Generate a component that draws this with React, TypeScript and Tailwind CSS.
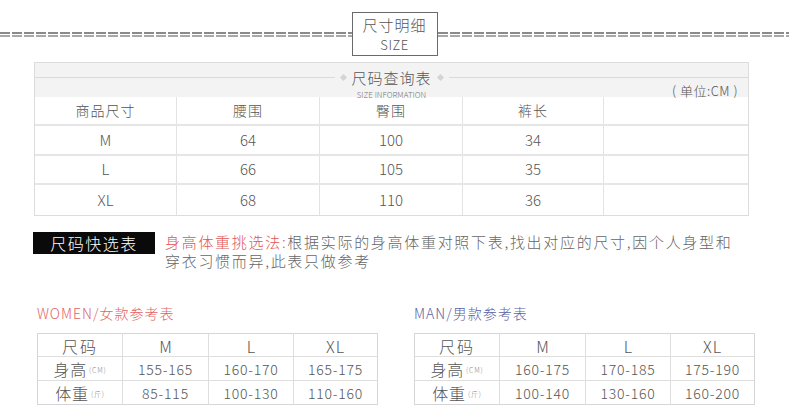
import React from 'react';

const sizeRows = [
  { size: 'M', waist: '64', hip: '100', length: '34' },
  { size: 'L', waist: '66', hip: '105', length: '35' },
  { size: 'XL', waist: '68', hip: '110', length: '36' },
];

const women = {
  title: 'WOMEN/女款参考表',
  height: ['155-165', '160-170', '165-175'],
  weight: ['85-115', '100-130', '110-160'],
};

const men = {
  title: 'MAN/男款参考表',
  height: ['160-175', '170-185', '175-190'],
  weight: ['100-140', '130-160', '160-200'],
};

function Dashes() {
  return (
    <div className="flex-1 flex flex-col gap-[1px]">
      <div className="h-[2px] bg-[repeating-linear-gradient(90deg,#8a8a8a_0_10px,transparent_10px_12px)]" />
      <div className="h-[2px] bg-[repeating-linear-gradient(90deg,#a8a8a8_0_10px,transparent_10px_12px)]" />
    </div>
  );
}

function Diamond() {
  return <span className="w-[5px] h-[5px] rotate-45 bg-[#d4d4d4] mx-[6px]" />;
}

type RefProps = {
  title: string;
  titleColor: string;
  height: string[];
  weight: string[];
};

function RefTable({ title, titleColor, height, weight }: RefProps) {
  return (
    <div className="w-[341px]">
      <div className={`text-[14px] leading-none tracking-[1px] ${titleColor}`}>{title}</div>
      <div className="mt-[13px] border border-[#d6d6d6] text-[#555]">
        <div className="grid grid-cols-[85px_86px_85px_1fr] h-[23px] border-b border-[#dedede] text-[16px] items-center">
          <div className="text-center border-r border-[#dedede] h-full flex items-center justify-center tracking-[2px]">尺码</div>
          <div className="text-center border-r border-[#dedede] h-full flex items-center justify-center">M</div>
          <div className="text-center border-r border-[#dedede] h-full flex items-center justify-center">L</div>
          <div className="text-center h-full flex items-center justify-center tracking-[1px]">XL</div>
        </div>
        <div className="grid grid-cols-[85px_86px_85px_1fr] h-[24px] border-b border-[#dedede] text-[14px] tracking-[0.8px]">
          <div className="border-r border-[#dedede] flex items-center justify-center text-[16px]">
            身高<span className="text-[7px] ml-[2px] mt-[3px] text-[#888]">(CM)</span>
          </div>
          {height.map((h, i) => (
            <div key={i} className={`flex items-center justify-center ${i < 2 ? 'border-r border-[#dedede]' : ''}`}>{h}</div>
          ))}
        </div>
        <div className="grid grid-cols-[85px_86px_85px_1fr] h-[23px] text-[14px] tracking-[0.8px]">
          <div className="border-r border-[#dedede] flex items-center justify-center text-[16px]">
            体重<span className="text-[7px] ml-[2px] mt-[3px] text-[#888]">(斤)</span>
          </div>
          {weight.map((w, i) => (
            <div key={i} className={`flex items-center justify-center ${i < 2 ? 'border-r border-[#dedede]' : ''}`}>{w}</div>
          ))}
        </div>
      </div>
    </div>
  );
}

export default function App() {
  return (
    <div className="w-[789px] h-[415px] bg-white overflow-hidden [font-family:'Noto_Sans_CJK_SC','Noto_Sans',sans-serif] font-light text-[#555]">
      {/* title */}
      <div className="flex items-center pt-[12px]">
        <Dashes />
        <div className="w-[86px] h-[44px] border border-[#6a6a6a] flex flex-col items-center justify-center">
          <div className="text-[15px] leading-[18px] tracking-[1px]">尺寸明细</div>
          <div className="text-[13px] leading-[15px] mt-[3px] tracking-[0.5px]">SIZE</div>
        </div>
        <Dashes />
      </div>

      {/* size table */}
      <div className="ml-[34px] w-[715px] mt-[6px] border border-[#dcdcdc]">
        <div className="bg-[#f3f3f3] h-[34px] flex flex-col">
          <div className="flex items-center h-[28px]">
            <div className="flex-1 h-px bg-[#dadada]" />
            <Diamond />
            <span className="text-[15px] leading-none tracking-[1px] text-[#555]">尺码查询表</span>
            <Diamond />
            <div className="flex-1 h-px bg-[#dadada]" />
          </div>
          <div className="grid grid-cols-[1fr_auto_1fr] items-end -mt-[7px] h-[13px]">
            <div />
            <div className="text-[8px] leading-none text-[#777] pb-[1px]">SIZE INFORMATION</div>
            <div className="text-right pr-[10px] text-[13px] leading-none text-[#555] tracking-[0.5px] pb-[3px]">( 单位:CM )</div>
          </div>
        </div>
        <div className="grid grid-cols-[142px_143px_143px_141px_1fr] h-[29px] border-b-2 border-[#e6e6e6] text-[14px]">
          {['商品尺寸', '腰围', '臀围', '裤长', ''].map((t, i) => (
            <div key={i} className={`flex items-center justify-center tracking-[1px] ${i < 4 ? 'border-r border-[#e3e3e3]' : ''}`}>{t}</div>
          ))}
        </div>
        {sizeRows.map((r, ri) => (
          <div
            key={r.size}
            className={`grid grid-cols-[142px_143px_143px_141px_1fr] text-[15px] ${ri === 1 ? 'h-[29px]' : 'h-[30px]'} ${ri < 2 ? 'border-b-2 border-[#e6e6e6]' : ''}`}
          >
            {[r.size, r.waist, r.hip, r.length, ''].map((t, i) => (
              <div key={i} className={`flex items-center justify-center ${i < 4 ? 'border-r border-[#e3e3e3]' : ''}`}>{t}</div>
            ))}
          </div>
        ))}
      </div>

      {/* quick select */}
      <div className="flex items-start ml-[33px] mt-[16px]">
        <div className="w-[122px] h-[22px] bg-[#0a0a0a] text-white text-[16px] tracking-[1.5px] flex items-center justify-center leading-none">
          尺码快选表
        </div>
        <p className="ml-[10px] text-[15px] leading-[19px] tracking-[1.7px] whitespace-nowrap text-[#666]">
          <span className="text-[#e05555]">身高体重挑选法:</span>根据实际的身高体重对照下表,找出对应的尺寸,因个人身型和
          <br />
          穿衣习惯而异,此表只做参考
        </p>
      </div>

      {/* reference tables */}
      <div className="flex ml-[37px] mt-[36px] gap-[36px]">
        <RefTable title={women.title} titleColor="text-[#e06464]" height={women.height} weight={women.weight} />
        <RefTable title={men.title} titleColor="text-[#5c5fa3]" height={men.height} weight={men.weight} />
      </div>
    </div>
  );
}
